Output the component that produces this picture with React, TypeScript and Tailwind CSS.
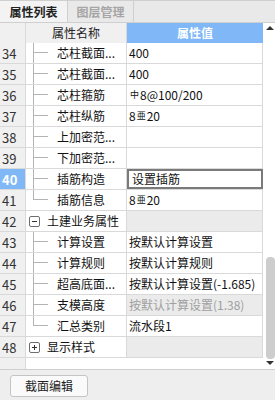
import React from 'react';

type Row = {
  no: number;
  name: string;
  value?: React.ReactNode;
  kind: 'child' | 'last' | 'group';
  open?: boolean;
  grayValue?: boolean;
  mutedText?: boolean;
  selected?: boolean;
};

const Sym = ({ c }: { c: string }) => (
  <span className="text-[9px] relative top-[-2px] mx-[1px]">{c}</span>
);

const rows: Row[] = [
  { no: 34, name: '芯柱截面...', value: '400', kind: 'child' },
  { no: 35, name: '芯柱截面...', value: '400', kind: 'child' },
  { no: 36, name: '芯柱箍筋', value: <><Sym c="中" />8@100/200</>, kind: 'child' },
  { no: 37, name: '芯柱纵筋', value: <>8<Sym c="亜" />20</>, kind: 'child' },
  { no: 38, name: '上加密范...', kind: 'child' },
  { no: 39, name: '下加密范...', kind: 'child' },
  { no: 40, name: '插筋构造', value: '设置插筋', kind: 'child', selected: true },
  { no: 41, name: '插筋信息', value: <>8<Sym c="亜" />20</>, kind: 'last' },
  { no: 42, name: '土建业务属性', kind: 'group', open: true, grayValue: true },
  { no: 43, name: '计算设置', value: '按默认计算设置', kind: 'child' },
  { no: 44, name: '计算规则', value: '按默认计算规则', kind: 'child' },
  { no: 45, name: '超高底面...', value: '按默认计算设置(-1.685)', kind: 'child' },
  { no: 46, name: '支模高度', value: '按默认计算设置(1.38)', kind: 'child', grayValue: true, mutedText: true },
  { no: 47, name: '汇总类别', value: '流水段1', kind: 'last' },
  { no: 48, name: '显示样式', kind: 'group', open: false, grayValue: true },
];

function NameCell({ row }: { row: Row }) {
  if (row.kind === 'group') {
    return (
      <div className="w-[101px] flex-none border-r border-[#d9d9d9] flex items-center pl-[3px] bg-white">
        <div className="w-[11px] h-[11px] border border-[#6e6e6e] rounded-[2px] flex items-center justify-center bg-white">
          {row.open ? (
            <div className="w-[5px] h-px bg-[#333]" />
          ) : (
            <div className="relative w-[5px] h-[5px] flex items-center justify-center">
              <div className="w-[5px] h-px bg-[#333]" />
              <div className="absolute w-px h-[5px] bg-[#333]" />
            </div>
          )}
        </div>
        <span className="ml-[7px] whitespace-nowrap">{row.name}</span>
      </div>
    );
  }
  return (
    <div className="w-[101px] flex-none border-r border-[#d9d9d9] flex items-stretch bg-white">
      <div className="ml-[7px] w-[15px] flex flex-col">
        <div className="h-[10px] border-l border-b border-[#b4b4b4]" />
        <div className={row.kind === 'last' ? 'flex-1' : 'flex-1 border-l border-[#b4b4b4]'} />
      </div>
      <span className="ml-[9px] self-center whitespace-nowrap">{row.name}</span>
    </div>
  );
}

export default function App() {
  return (
    <div className="w-[275px] h-[400px] bg-[#eeeeee] flex flex-col overflow-hidden text-[12px] text-[#111] font-['Noto_Sans_CJK_SC','Microsoft_YaHei',sans-serif] leading-none">
      {/* tabs */}
      <div className="h-[23px] flex-none flex border-t border-b border-[#cfcfcf] bg-[#e9e9e9]">
        <div className="w-[68px] flex items-center justify-center border-r border-[#cfcfcf] bg-[#f3f3f3] font-bold text-[#222]">
          属性列表
        </div>
        <div className="w-[66px] flex items-center justify-center border-r border-[#cfcfcf] font-bold text-[#a6a6a6]">
          图层管理
        </div>
      </div>

      <div className="flex flex-1 min-h-0 border-b border-[#cfcfcf]">
        {/* grid */}
        <div className="w-[263px] flex flex-col bg-white">
          <div className="h-[20px] flex-none flex">
            <div className="w-[26px] border-r border-[#d9d9d9] bg-[#f0f0f0]" />
            <div className="w-[101px] border-r border-[#d9d9d9] bg-[#f0f0f0] flex items-center justify-center text-[#222]">
              属性名称
            </div>
            <div className="w-[136px] bg-[#80b8f7] flex items-center justify-center text-white font-bold">
              属性值
            </div>
          </div>
          {rows.map((row) => (
            <div key={row.no} className="h-[21px] flex-none flex border-b border-[#d9d9d9]">
              <div
                className={
                  row.selected
                    ? 'w-[26px] flex-none border-r border-[#d9d9d9] bg-[#80b8f7] text-white font-bold text-[13px] flex items-center pl-[2px]'
                    : 'w-[26px] flex-none border-r border-[#d9d9d9] bg-[#f0f0f0] text-[#333] text-[13px] flex items-center pl-[2px]'
                }
              >
                {row.no}
              </div>
              <NameCell row={row} />
              <div
                className={
                  row.selected
                    ? 'w-[136px] flex-none border-2 border-[#7a7a7a] flex items-center pl-[3px] whitespace-nowrap overflow-hidden'
                    : row.grayValue
                    ? 'w-[136px] flex-none border-r border-[#d9d9d9] bg-[#ebebeb] flex items-center pl-[2px] whitespace-nowrap overflow-hidden'
                    : 'w-[136px] flex-none border-r border-[#d9d9d9] flex items-center pl-[2px] whitespace-nowrap overflow-hidden'
                }
              >
                <span className={row.mutedText ? 'text-[#a0a0a0]' : ''}>{row.value}</span>
              </div>
            </div>
          ))}
          <div className="flex-1 flex">
            <div className="w-[26px] border-r border-[#d9d9d9] bg-[#f0f0f0]" />
          </div>
        </div>

        {/* scrollbar */}
        <div className="w-[12px] flex flex-col bg-white">
          <div className="h-[9px] flex-none flex items-end justify-center pb-[2px] pl-[2px]">
            <div className="w-0 h-0 border-l-[4px] border-r-[4px] border-b-[4px] border-l-transparent border-r-transparent border-b-[#333]" />
          </div>
          <div className="flex-1 flex flex-col justify-end pl-[3px] pb-[1px]">
            <div className="h-[102px] w-[9px] rounded-[4px] bg-[#cdcdcd]" />
          </div>
          <div className="h-[9px] flex-none flex items-start justify-center pt-[1px] pl-[2px]">
            <div className="w-0 h-0 border-l-[4px] border-r-[4px] border-t-[4px] border-l-transparent border-r-transparent border-t-[#333]" />
          </div>
        </div>
      </div>

      {/* bottom panel */}
      <div className="h-[30px] flex-none flex items-start pt-[5px] pl-[10px]">
        <button className="w-[78px] h-[22px] bg-[#fafafa] border border-[#c4c4c4] rounded-[3px] text-[12px] text-[#222]">
          截面编辑
        </button>
      </div>
    </div>
  );
}
